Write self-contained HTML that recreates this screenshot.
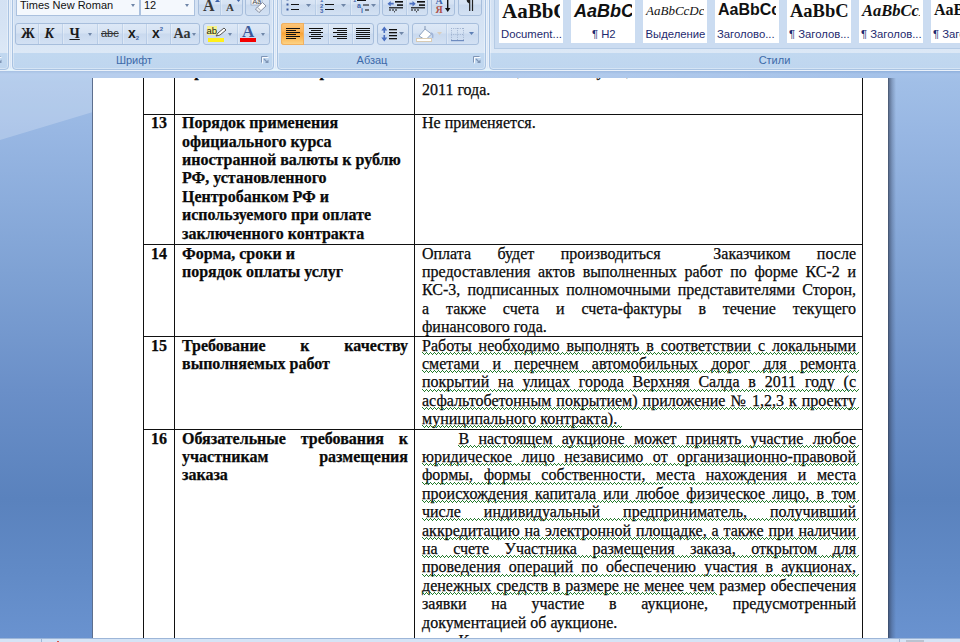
<!DOCTYPE html>
<html lang="ru"><head><meta charset="utf-8"><title>Word</title>
<style>
html,body{margin:0;padding:0}
body{width:960px;height:642px;overflow:hidden;position:relative;font-family:"Liberation Sans",sans-serif;background:#6a93d0}
#ws{position:absolute;left:0;top:71px;width:960px;height:571px;background:linear-gradient(#8fb0dc 0px,#a5c2e9 3px,#a1bfe7 10px,#98b7e3 60px,#7fa2d4 200px,#6a8fc8 320px,#5a82bd 428px,#618ac6 500px,#6a93d0 571px)}
#page{position:absolute;left:93px;top:78px;width:795px;height:560px;background:#fff}
#psh{position:absolute;left:888px;top:78px;width:8px;height:560px;background:linear-gradient(to right,rgba(45,55,75,.8) 0,rgba(50,62,88,.55) 1.5px,rgba(55,70,100,.3) 4px,rgba(60,80,120,0) 8px)}
#sb{position:absolute;left:0;top:638px;width:960px;height:4px;background:#d5e4f6;border-top:1px solid #9db6d8;box-sizing:border-box}
#sb i{position:absolute;top:0;width:1px;height:4px;background:#9fb7d6}
#glass{position:absolute;left:0;top:0;width:300px;height:70px;background:rgba(255,255,255,.22);clip-path:polygon(0 0,205px 0,205px 8px,93px 41px,0 69px)}
#glass2{position:absolute;left:205px;top:0;width:700px;height:7px;background:linear-gradient(to right,rgba(255,255,255,.22),rgba(255,255,255,.16) 50%,rgba(255,255,255,0))}
#pageL{position:absolute;left:92px;top:78px;width:1px;height:560px;background:#5d6f8e}
.vl{position:absolute;width:1px;background:#111;top:78px;height:560px}
.hl{position:absolute;height:1px;background:#111;left:143px;width:720px}
.t{position:absolute;font-family:"Liberation Serif",serif;font-size:16px;line-height:18.4px;color:#0a0a0a;white-space:nowrap;-webkit-text-stroke:0.25px #0a0a0a}
.t div{height:18.4px}
.j div{text-align:justify;text-align-last:justify;white-space:normal}
.j div.l{text-align-last:left}
.b{font-weight:bold}
#rb{position:absolute;left:0;top:0;width:960px;height:71px;background:linear-gradient(#d6e4f5 0,#dbe8f7 68px,#e4f5fd 69px,#dff2fc 71px);overflow:hidden}
.grp{position:absolute;top:-4px;height:72px;border:1px solid #a9c3e2;border-radius:4px;background:linear-gradient(#d3e1f3 0,#d5e3f4 28px,#dce8f6 56px,#c1d8f0 56px,#bfd6ef 72px);box-shadow:0 0 0 1px #eaf1fa, inset 0 0 0 1px rgba(255,255,255,.35)}
.gl{position:absolute;top:53px;height:15px;line-height:15px;font-size:11px;color:#3d6aaa;text-align:center}
.bg{position:absolute;height:20px;border:1px solid #a7bedc;border-radius:3px;background:linear-gradient(#dde8f6 0,#d5e2f3 9px,#c9d9ee 10px,#d3e1f3 20px);box-sizing:content-box}
.bg.t0{top:-6px}
.bg.t1{top:23px}
.sep{position:absolute;top:0;width:1px;height:20px;background:linear-gradient(#c3d5ea,#b6cbe6);box-shadow:1px 0 0 rgba(255,255,255,.28)}
.cb{position:absolute;top:-5px;height:19px;border:1px solid #abc1de;background:#f4f8fd;font-size:12px;line-height:20px;color:#111}
.dd{position:absolute;width:0;height:0;border-left:2.5px solid transparent;border-right:2.5px solid transparent;border-top:3px solid #6f86a8}
.ic{position:absolute;color:#1a1a1a;white-space:nowrap}
.si{position:absolute;top:0;width:64px;height:43px;background:#fff;overflow:hidden}
.si .pc{position:absolute;left:0;top:0;width:61px;height:26px;overflow:hidden}
.si .p{position:absolute;left:3px;white-space:nowrap;color:#111}
.si .n{position:absolute;left:0;width:64px;top:27px;font-size:11.3px;line-height:15px;color:#1e2a6e;white-space:nowrap;text-align:left;padding-left:2px;box-sizing:border-box}
</style></head><body>
<div id="ws"><div id="glass"></div><div id="glass2"></div></div>
<div id="page"></div><div id="pageL"></div><div id="psh"></div>
<div class="vl" style="left:143px"></div><div class="vl" style="left:174px"></div><div class="vl" style="left:414px"></div><div class="vl" style="left:862px"></div><div class="hl" style="top:114px"></div><div class="hl" style="top:244px"></div><div class="hl" style="top:336px"></div><div class="hl" style="top:429px"></div>
<div style="position:absolute;left:93px;top:78px;width:795px;height:10px;overflow:hidden"><div class="t b" style="left:92px;top:-15.7px"><div>применения <span id="k2" style="margin-left:7.5px">контракта</span></div></div><div class="t" style="left:329px;top:-15.7px"><div><span style="display:inline-block;width:99px;text-align:right">смет,</span><span style="display:inline-block;width:68px"></span><span style="letter-spacing:.5px">сумм,</span></div></div></div>
<div class="t " style="left:422px;top:80.7px"><div>2011 года.</div></div>
<div class="t b" style="left:151px;top:114.3px"><div>13</div></div>
<div class="t b" style="left:182px;top:114.3px"><div>Порядок применения</div><div>официального курса</div><div>иностранной валюты к рублю</div><div>РФ, установленного</div><div>Центробанком РФ и</div><div>используемого при оплате</div><div>заключенного контракта</div></div>
<div class="t " style="left:422px;top:114.3px"><div>Не применяется.</div></div>
<div class="t b" style="left:151px;top:244.6px"><div>14</div></div>
<div class="t b" style="left:182px;top:244.6px"><div>Форма, сроки и</div><div>порядок оплаты услуг</div></div>
<div class="t j" style="left:422px;top:244.6px;width:434px"><div>Оплата будет производиться &nbsp;Заказчиком после</div><div>предоставления актов выполненных работ по форме КС-2 и</div><div>КС-3, подписанных полномочными представителями Сторон,</div><div>а также счета и счета-фактуры в течение текущего</div><div class="l">финансового года.</div></div>
<div class="t b" style="left:151px;top:336.6px"><div>15</div></div>
<div class="t b j" style="left:182px;top:336.6px;width:226px"><div>Требование к качеству</div><div class="l">выполняемых работ</div></div>
<div class="t j u" style="left:422px;top:336.6px;width:434px"><div><span>Работы необходимо выполнять в соответствии с локальными</span></div><div><span>сметами и перечнем автомобильных дорог для ремонта</span></div><div><span>покрытий на улицах города Верхняя Салда в 2011 году (с</span></div><div><span>асфальтобетонным покрытием) приложение № 1,2,3 к проекту</span></div><div class="l"><span>муниципального контракта).</span></div></div>
<div class="t b" style="left:151px;top:429.7px"><div>16</div></div>
<div class="t b j" style="left:182px;top:429.7px;width:226px"><div>Обязательные требования к</div><div>участникам размещения</div><div class="l">заказа</div></div>
<div class="t j u" style="left:422px;top:429.7px;width:434px"><div style="text-indent:36.5px"><span>В настоящем аукционе может принять участие любое</span></div><div><span>юридическое лицо независимо от организационно-правовой</span></div><div><span>формы, формы собственности, места нахождения и места</span></div><div><span>происхождения капитала или любое физическое лицо, в том</span></div><div><span>числе индивидуальный предприниматель, получивший</span></div><div><span>аккредитацию на электронной площадке, а также при наличии</span></div><div><span>на счете Участника размещения заказа, открытом для</span></div><div><span>проведения операций по обеспечению участия в аукционах,</span></div><div><span>денежных средств в размере не менее чем</span> размер обеспечения</div><div>заявки на участие в аукционе, предусмотренный</div><div class="l">документацией об аукционе.</div><div class="l" style="text-indent:36.5px">К</div></div>
<svg style="position:absolute;left:0;top:0" width="960" height="642" viewBox="0 0 960 642" shape-rendering="crispEdges"><defs><pattern id="zz" width="4" height="3" patternUnits="userSpaceOnUse" x="0" y="0"><rect x="0" y="0" width="1" height="1" fill="#237a2b"/><rect x="1" y="1" width="1" height="1" fill="#237a2b"/><rect x="2" y="2" width="1" height="1" fill="#237a2b"/><rect x="3" y="1" width="1" height="1" fill="#237a2b"/></pattern></defs><rect transform="translate(422,352)" x="0" y="0" width="437" height="3" fill="url(#zz)"/><rect transform="translate(422,370)" x="0" y="0" width="437" height="3" fill="url(#zz)"/><rect transform="translate(422,389)" x="0" y="0" width="437" height="3" fill="url(#zz)"/><rect transform="translate(422,407)" x="0" y="0" width="437" height="3" fill="url(#zz)"/><rect transform="translate(422,425)" x="0" y="0" width="200" height="3" fill="url(#zz)"/><rect transform="translate(458,445)" x="0" y="0" width="401" height="3" fill="url(#zz)"/><rect transform="translate(422,463)" x="0" y="0" width="437" height="3" fill="url(#zz)"/><rect transform="translate(422,482)" x="0" y="0" width="437" height="3" fill="url(#zz)"/><rect transform="translate(422,500)" x="0" y="0" width="437" height="3" fill="url(#zz)"/><rect transform="translate(422,518)" x="0" y="0" width="437" height="3" fill="url(#zz)"/><rect transform="translate(422,537)" x="0" y="0" width="437" height="3" fill="url(#zz)"/><rect transform="translate(422,555)" x="0" y="0" width="437" height="3" fill="url(#zz)"/><rect transform="translate(422,574)" x="0" y="0" width="437" height="3" fill="url(#zz)"/><rect transform="translate(422,592)" x="0" y="0" width="295" height="3" fill="url(#zz)"/></svg>
<div id="sb"><i style="left:41px"></i><i style="left:899px"></i><i style="left:57px;top:2px;width:2px;height:1px;background:#d9534a"></i><i style="left:906px;top:1px;width:18px;height:3px;background:#b9c3d1"></i></div>
<div id="rb">
<div class="grp" style="left:-20px;width:27px"></div>
<div class="grp" style="left:12px;width:260px"></div>
<div class="grp" style="left:277px;width:207px"></div>
<div class="grp" style="left:489px;width:500px"></div>
<div class="gl" style="left:12px;width:244px">Шрифт</div>
<div class="gl" style="left:277px;width:190px">Абзац</div>
<div class="gl" style="left:589px;width:371px">Стили</div>
<div class="cb" style="left:16px;width:122px"><span style="position:absolute;left:3px;top:-1px;font-size:11px">Times New Roman</span><i class="dd" style="left:114px;top:8px"></i></div>
<div class="cb" style="left:140px;width:53px"><span style="position:absolute;left:3px;top:-1px;font-size:11px">12</span><i class="dd" style="left:44px;top:8px"></i></div>
<div class="bg t0" style="left:198px;width:43px"><div class="sep" style="left:21px"></div>
 <span class="ic" style="left:4px;top:1.5px;font:bold 16px 'Liberation Serif',serif;color:#3a3a3a">A</span>
 <span class="ic" style="left:27px;top:6px;font:bold 11px 'Liberation Serif',serif;color:#3a3a3a">A</span></div>
<div class="bg t0" style="left:245px;width:23px"></div>
<div class="bg t1" style="left:15px;width:183px">
 <div class="sep" style="left:22px"></div><div class="sep" style="left:46px"></div><div class="sep" style="left:81px"></div><div class="sep" style="left:106px"></div><div class="sep" style="left:130px"></div><div class="sep" style="left:154px"></div>
 <span class="ic" style="left:5px;top:1.7px;font:bold 14px 'Liberation Serif',serif">Ж</span>
 <span class="ic" style="left:28.5px;top:1.7px;font:italic bold 14px 'Liberation Serif',serif">К</span>
 <span class="ic" style="left:53.5px;top:1.7px;font:bold 14px 'Liberation Serif',serif;text-decoration:underline">Ч</span>
 <i class="dd" style="left:72px;top:9px"></i>
 <span class="ic" style="left:85px;top:3px;font:11px 'Liberation Sans',sans-serif;text-decoration:line-through;color:#333">abc</span>
 <span class="ic" style="left:112px;top:1px;font:bold 14px 'Liberation Sans',sans-serif">x<span style="font-size:6px;color:#3b62a5;vertical-align:-2px">2</span></span>
 <span class="ic" style="left:136px;top:1px;font:bold 14px 'Liberation Sans',sans-serif">x<span style="font-size:6px;color:#3b62a5;vertical-align:7px">2</span></span>
 <span class="ic" style="left:157.5px;top:2.3px;font:bold 14px 'Liberation Serif',serif;color:#333">Aa</span>
 <i class="dd" style="left:176px;top:9px"></i>
</div>
<div class="bg t1" style="left:203px;width:65px"><div class="sep" style="left:33px"></div>
 <span class="ic" style="left:2.5px;top:1.5px;font:9.5px 'Liberation Sans',sans-serif;background:#f7f28a;line-height:9px">ab</span>
 <div style="position:absolute;left:4px;top:14px;width:16px;height:4px;background:#ffef1a"></div>
 <svg style="position:absolute;left:11px;top:3px" width="13" height="11" viewBox="0 0 13 11"><path d="M1 9 L3 6 L9 1 L11 3 L5 8 Z" fill="#fff" stroke="#555" stroke-width="1"/></svg>
 <i class="dd" style="left:24px;top:9px"></i>
 <span class="ic" style="left:38px;top:-2px;font:bold 17px 'Liberation Serif',serif;color:#3c5a9a">A</span>
 <div style="position:absolute;left:36px;top:14px;width:16px;height:4px;background:#f40000"></div>
 <i class="dd" style="left:57px;top:9px"></i>
</div>
<div class="bg t0" style="left:281px;width:97px"><div class="sep" style="left:33px"></div><div class="sep" style="left:68px"></div></div>
<div class="bg t0" style="left:382px;width:44px"><div class="sep" style="left:23px"></div></div>
<div class="bg t0" style="left:431px;width:22px"></div>
<div class="bg t0" style="left:458px;width:22px"></div>
<div class="bg t1" style="left:281px;width:91px"><div class="sep" style="left:46px"></div><div class="sep" style="left:70px"></div>
 <div style="position:absolute;left:-1px;top:-1px;width:23px;height:22px;border-radius:3px 0 0 3px;background:linear-gradient(#fdc77a 0,#fbb255 9px,#f9a233 10px,#fdd78c 22px);box-shadow:inset 0 0 0 1px #f0b060"></div>
</div>
<div class="bg t1" style="left:377px;width:30px"></div>
<div class="bg t1" style="left:412px;width:65px"><div class="sep" style="left:33px"></div></div>
<svg id="ics" style="position:absolute;left:0;top:0" width="960" height="70" viewBox="0 0 960 70">
<rect x="286.5" y="-1.5" width="2" height="2" fill="#3d5c9e"/><rect x="291" y="-1" width="8" height="1" fill="#111"/><rect x="286.5" y="3.5" width="2" height="2" fill="#3d5c9e"/><rect x="291" y="4" width="8" height="1" fill="#111"/><rect x="286.5" y="8.5" width="2" height="2" fill="#3d5c9e"/><rect x="291" y="9" width="8" height="1" fill="#111"/><path d="M306 4 h5 l-2.5 3 z" fill="#6f86a8"/><text x="320" y="2" font-family="Liberation Sans,sans-serif" font-size="6" font-weight="bold" fill="#3d62aa">1</text><text x="320" y="7.5" font-family="Liberation Sans,sans-serif" font-size="6" font-weight="bold" fill="#3d62aa">2</text><text x="320" y="12.5" font-family="Liberation Sans,sans-serif" font-size="6" font-weight="bold" fill="#3d62aa">3</text><rect x="325" y="-1" width="9" height="1" fill="#111"/><rect x="325" y="4" width="9" height="1" fill="#111"/><rect x="325" y="9" width="9" height="1" fill="#111"/><path d="M341 4 h5 l-2.5 3 z" fill="#6f86a8"/><text x="353" y="2" font-family="Liberation Sans,sans-serif" font-size="6" font-weight="bold" fill="#3d62aa">1</text><rect x="357" y="0" width="9" height="1" fill="#111"/><text x="357" y="7.5" font-family="Liberation Sans,sans-serif" font-size="7" font-weight="bold" fill="#3d62aa">a</text><rect x="363" y="4.5" width="6" height="1" fill="#111"/><text x="361" y="12.5" font-family="Liberation Sans,sans-serif" font-size="7" font-weight="bold" fill="#3d62aa">i</text><rect x="365" y="9.5" width="4" height="1" fill="#111"/><path d="M371 4 h5 l-2.5 3 z" fill="#6f86a8"/><rect x="395" y="1" width="8" height="1.6" fill="#111"/><rect x="397" y="4.3" width="6" height="1.6" fill="#111"/><rect x="389" y="7.2" width="14" height="1.2" fill="#111"/><rect x="389" y="9.5" width="2" height="1" fill="#111"/><rect x="392" y="9.5" width="2" height="1" fill="#111"/><rect x="395" y="9.5" width="2" height="1" fill="#111"/><rect x="394" y="11.3" width="1" height="1" fill="#111"/><path d="M387.5 3.7 l3.2 -2.7 v1.8 h3 v1.8 h-3 v1.8 z" fill="#4a6fc0"/><rect x="417" y="1" width="8" height="1.6" fill="#111"/><rect x="419" y="4.3" width="6" height="1.6" fill="#111"/><rect x="411" y="7.2" width="14" height="1.2" fill="#111"/><rect x="411" y="9.5" width="2" height="1" fill="#111"/><rect x="414" y="9.5" width="2" height="1" fill="#111"/><rect x="417" y="9.5" width="2" height="1" fill="#111"/><rect x="416" y="11.3" width="1" height="1" fill="#111"/><path d="M415.7 3.7 l-3.2 -2.7 v1.8 h-3 v1.8 h3 v1.8 z" fill="#4a6fc0"/><text x="435.5" y="4" font-family="Liberation Serif,serif" font-size="10" font-weight="bold" fill="#3d62aa">A</text><text x="435.5" y="12.5" font-family="Liberation Serif,serif" font-size="10" font-weight="bold" fill="#b0524a">Я</text><path d="M447 -2 h1.4 v10 h2 l-2.7 4 l-2.7 -4 h2 z" fill="#111"/><path d="M469 -3 h5.5 v1 h-1.4 v13 h-1.2 v-13 h-1.6 v13 h-1.2 v-7.5 a3.4 3.4 0 0 1 -0.1 -6.5 z" fill="#222"/><rect x="286" y="28" width="14" height="1" fill="#111"/><rect x="286" y="30" width="10" height="1" fill="#111"/><rect x="286" y="32" width="14" height="1" fill="#111"/><rect x="286" y="34" width="10" height="1" fill="#111"/><rect x="286" y="36" width="14" height="1" fill="#111"/><rect x="286" y="38" width="10" height="1" fill="#111"/><rect x="309" y="28" width="14" height="1" fill="#111"/><rect x="311" y="30" width="10" height="1" fill="#111"/><rect x="309" y="32" width="14" height="1" fill="#111"/><rect x="311" y="34" width="10" height="1" fill="#111"/><rect x="309" y="36" width="14" height="1" fill="#111"/><rect x="311" y="38" width="10" height="1" fill="#111"/><rect x="333" y="28" width="14" height="1" fill="#111"/><rect x="337" y="30" width="10" height="1" fill="#111"/><rect x="333" y="32" width="14" height="1" fill="#111"/><rect x="337" y="34" width="10" height="1" fill="#111"/><rect x="333" y="36" width="14" height="1" fill="#111"/><rect x="337" y="38" width="10" height="1" fill="#111"/><rect x="356" y="28" width="14" height="1" fill="#111"/><rect x="356" y="30" width="14" height="1" fill="#111"/><rect x="356" y="32" width="14" height="1" fill="#111"/><rect x="356" y="34" width="14" height="1" fill="#111"/><rect x="356" y="36" width="14" height="1" fill="#111"/><rect x="356" y="38" width="14" height="1" fill="#111"/><path d="M384.3 26.5 l3 4 h-2.2 v2.5 h-1.6 v-2.5 h-2.2 z M384.3 41.5 l3 -4 h-2.2 v-2.5 h-1.6 v2.5 h-2.2 z" fill="#4a6fc0"/><rect x="389" y="29" width="8" height="1.3" fill="#111"/><rect x="389" y="32" width="8" height="1.3" fill="#111"/><rect x="389" y="35" width="8" height="1.3" fill="#111"/><rect x="389" y="38" width="8" height="1.3" fill="#111"/><path d="M399 32 h5 l-2.5 3 z" fill="#6f86a8"/><path d="M419 36 l6 -7 l6.5 5 l-6 6 z" fill="#fff" stroke="#8fa3c0" stroke-width="1"/><path d="M425 29 v-3" stroke="#8fa3c0" stroke-width="1.2" fill="none"/><path d="M431 33 q2.5 1 1.5 5" stroke="#9fb4d8" stroke-width="1.5" fill="none"/><rect x="416.5" y="38.5" width="15" height="3" fill="#fff" stroke="#d8cbb4" stroke-width="1"/><path d="M437 32 h5 l-2.5 3 z" fill="#d9cdbd"/><g stroke="#9fb2cf" stroke-width="1" stroke-dasharray="1 1.2" fill="none"><path d="M451.5 28 v12 M457.5 28 v12 M463.5 28 v12 M451 28.5 h13 M451 34.5 h13"/></g><rect x="451" y="40" width="13" height="1.2" fill="#6f8cc0"/><path d="M469 32 h5 l-2.5 3 z" fill="#5d7fb5"/><path d="M261.5 62.5 v-6 h6" stroke="#7f95b5" fill="none" stroke-width="1"/><path d="M262.5 63.5 v-6 h6" stroke="#fff" fill="none" stroke-width="1" opacity=".9"/><path d="M265 63 h3.5 v-3.5 z" fill="#7f95b5"/><path d="M264 59 l3 3" stroke="#7f95b5" stroke-width="1.2"/><path d="M473.5 62.5 v-6 h6" stroke="#7f95b5" fill="none" stroke-width="1"/><path d="M474.5 63.5 v-6 h6" stroke="#fff" fill="none" stroke-width="1" opacity=".9"/><path d="M477 63 h3.5 v-3.5 z" fill="#7f95b5"/><path d="M476 59 l3 3" stroke="#7f95b5" stroke-width="1.2"/><path d="M-5.5 62.5 v-6 h6" stroke="#7f95b5" fill="none" stroke-width="1"/><path d="M-4.5 63.5 v-6 h6" stroke="#fff" fill="none" stroke-width="1" opacity=".9"/><path d="M-2 63 h3.5 v-3.5 z" fill="#7f95b5"/><path d="M-3 59 l3 3" stroke="#7f95b5" stroke-width="1.2"/><rect x="251" y="-3" width="11" height="8" fill="#f4f6fa" stroke="#98a8c0" stroke-width=".8"/><text x="252.5" y="3.5" font-family="Liberation Sans,sans-serif" font-size="7" fill="#444">Aa</text><path d="M255.5 9 l7 -6.5 l3.5 3.5 l-7 6.5 z" fill="#fff" stroke="#8a93a5" stroke-width="1"/><path d="M255.5 9 l2 -1.8 l3.5 3.5 l-2 1.8z" fill="#e9edf3" stroke="#8a93a5" stroke-width=".8"/><path d="M215 2 l2.5 -3 l2.5 3z" fill="#3d62aa"/><path d="M236 -1 h5 l-2.5 3z" fill="#3d62aa"/></svg>
<div style="position:absolute;left:494px;top:-4px;width:480px;height:51px;border:1px solid #b5cbe5;background:#cbdcf1"></div>
<div class="si" style="left:499px"><div class="pc"><span class="p" style="font:bold 21px 'Liberation Serif',serif;top:-1.2px">AaBbC</span></div><span class="n" style="padding-left:2px">Document...</span></div>
<div class="si" style="left:571px"><div class="pc"><span class="p" style="font:italic bold 18px 'Liberation Sans',sans-serif;top:0.8px">AaBbC</span></div><span class="n" style="padding-left:21px">¶ H2</span></div>
<div class="si" style="left:643px"><div class="pc"><span class="p" style="font:italic 13px 'Liberation Serif',serif;top:2.9px">AaBbCcDc</span></div><span class="n" style="padding-left:2.5px">Выделение</span></div>
<div class="si" style="left:715px"><div class="pc"><span class="p" style="font:bold 16px 'Liberation Sans',sans-serif;top:1px">AaBbCc</span></div><span class="n" style="padding-left:2px">Заголово...</span></div>
<div class="si" style="left:787px"><div class="pc"><span class="p" style="font:bold 18.5px 'Liberation Serif',serif;top:0.6px">AaBbC</span></div><span class="n" style="padding-left:2px">¶ Заголов...</span></div>
<div class="si" style="left:859px"><div class="pc"><span class="p" style="font:italic bold 16.5px 'Liberation Serif',serif;top:0.8px">AaBbCcD</span></div><span class="n" style="padding-left:2px">¶ Заголов...</span></div>
<div class="si" style="left:931px"><div class="pc"><span class="p" style="font:bold 16px 'Liberation Serif',serif;top:1.2px">AaBb</span></div><span class="n" style="padding-left:2px">¶ Заголов...</span></div>
</div>
</body></html>
